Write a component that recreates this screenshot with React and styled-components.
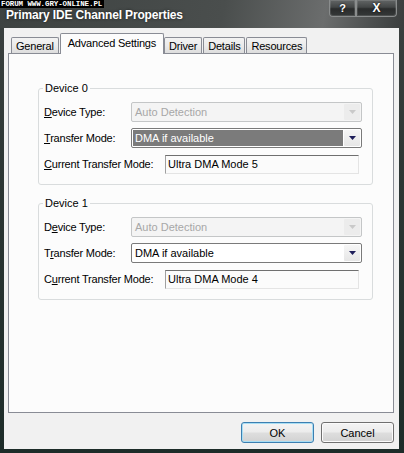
import React from "react";
import styled, { createGlobalStyle } from "styled-components";

const GlobalStyle = createGlobalStyle`
  html, body {
    margin: 0;
    padding: 0;
    background: #1b2624;
  }
  body {
    font-family: "Liberation Sans", Arial, sans-serif;
  }
`;

const Window = styled.div`
  position: relative;
  width: 404px;
  height: 453px;
  display: flex;
  flex-direction: column;
  overflow: hidden;
  background: linear-gradient(180deg, #3c4140 0%, #2c3634 40%, #1d2c29 100%);
`;

const Watermark = styled.div`
  position: absolute;
  top: 0;
  left: 0;
  padding: 0 2px 0 1px;
  background: #000;
  color: #fff;
  font-family: "Liberation Mono", monospace;
  font-weight: bold;
  font-size: 7.5px;
  line-height: 8px;
  letter-spacing: -0.1px;
`;

const TitleBar = styled.div`
  height: 28px;
  display: flex;
  align-items: flex-start;
  background: linear-gradient(100deg, #3d4241 0%, #4a4e4d 55%, #6b6d6d 80%, #4c4f4f 92%, #3a3d3d 100%);
`;

const Title = styled.div`
  flex: 1;
  padding: 8px 0 0 6px;
  color: #fff;
  font-weight: bold;
  font-size: 12px;
  line-height: 14px;
  letter-spacing: -0.15px;
  text-shadow: 0 0 3px rgba(0, 0, 0, 0.6);
`;

const CaptionButtons = styled.div`
  display: flex;
  margin-right: 7px;
`;

const CaptionButton = styled.div`
  width: ${(p) => p.$width}px;
  height: 17px;
  box-sizing: border-box;
  display: flex;
  align-items: center;
  justify-content: center;
  border: 1px solid #8a8d8d;
  border-top: none;
  border-radius: ${(p) => (p.$side === "left" ? "0 0 0 4px" : "0 0 4px 0")};
  background: linear-gradient(180deg, #626565 0%, #434646 45%, #2a2c2c 55%, #353838 100%);
  box-shadow: inset 0 0 0 1px rgba(255, 255, 255, 0.12);
  color: #fff;
  font-weight: bold;
  font-size: ${(p) => p.$size}px;
  line-height: 1;
  text-shadow: 0 0 2px #000;
`;

const Client = styled.div`
  flex: 1;
  display: flex;
  flex-direction: column;
  margin: 0 5px 4px 4px;
  background: #f1f1f1;
`;

const TabStrip = styled.div`
  display: flex;
  align-items: flex-end;
  height: 20px;
  padding: 5px 0 0 7px;
  position: relative;
  z-index: 1;
`;

const Tab = styled.div`
  height: ${(p) => (p.$active ? 21 : 16)}px;
  box-sizing: border-box;
  display: flex;
  align-items: center;
  padding: 0 ${(p) => (p.$active ? 7 : 4)}px ${(p) => (p.$active ? 3 : 0)}px;
  margin-right: ${(p) => (p.$active ? 0 : 1)}px;
  margin-bottom: ${(p) => (p.$active ? -1 : 0)}px;
  border: 1px solid #898c95;
  border-bottom: none;
  border-radius: 2px 2px 0 0;
  background: ${(p) =>
    p.$active ? "#fcfcfc" : "linear-gradient(180deg, #f3f3f3 0%, #ebebeb 50%, #dddddd 100%)"};
  font-size: 11px;
  letter-spacing: -0.2px;
  color: #000;
  white-space: nowrap;
`;

const Panel = styled.div`
  flex: 1;
  margin: 0 5px 0 4px;
  padding: 27px 20px 0 29px;
  border: 1px solid #898c95;
  background: #fcfcfc;
`;

const Group = styled.fieldset`
  margin: 0 0 11px;
  padding: 7px 10px 10px 5px;
  min-inline-size: 0;
  border: 1px solid #d9dcdd;
  border-radius: 3px;
`;

const Legend = styled.legend`
  margin-left: -1px;
  padding: 0 2px;
  font-size: 11px;
  line-height: 14px;
  color: #000;
`;

const Row = styled.div`
  display: flex;
  align-items: center;
  height: 20px;
  & + & {
    margin-top: 6px;
  }
`;

const Label = styled.div`
  width: ${(p) => p.$width}px;
  flex-shrink: 0;
  font-size: 11px;
  letter-spacing: -0.2px;
  color: #000;
`;

const Combo = styled.div`
  flex: 1;
  height: 20px;
  box-sizing: border-box;
  display: flex;
  padding: 1px;
  border: 1px solid ${(p) => (p.$disabled ? "#c4c6c7" : "#7a7a7a")};
  border-radius: 2px;
  background: ${(p) => (p.$disabled ? "#f4f4f4" : "#fff")};
`;

const ComboText = styled.div`
  flex: 1;
  display: flex;
  align-items: center;
  margin-right: 1px;
  padding-left: 2px;
  font-size: 11px;
  color: ${(p) => (p.$disabled ? "#a7a7a7" : p.$selected ? "#fff" : "#000")};
  background: ${(p) => (p.$selected ? "#7b7b7b" : "transparent")};
`;

const ArrowBox = styled.div`
  width: 16px;
  display: flex;
  align-items: center;
  justify-content: center;
  background: ${(p) => (p.$disabled ? "#ececec" : "linear-gradient(180deg, #f6f6f6, #e6e6e6)")};
  border-radius: 1px;
`;

const TextBox = styled.div`
  flex: 1;
  height: 19px;
  box-sizing: border-box;
  display: flex;
  align-items: center;
  margin-right: 3px;
  padding-left: 2px;
  border-top: 1px solid #6f6f6f;
  border-left: 1px solid #a0a0a0;
  border-right: 1px solid #e4e4e4;
  border-bottom: 1px solid #e4e4e4;
  background: #fbfbfb;
  font-size: 11px;
  color: #000;
`;

const Footer = styled.div`
  height: 36px;
  box-sizing: border-box;
  display: flex;
  justify-content: flex-end;
  gap: 7px;
  padding: 9px 5px 0 0;
`;

const Button = styled.div`
  width: 73px;
  height: 21px;
  box-sizing: border-box;
  display: flex;
  align-items: center;
  justify-content: center;
  border: 1px solid ${(p) => (p.$default ? "#3c7fb1" : "#707070")};
  border-radius: 3px;
  background: linear-gradient(180deg, #f4f4f4 0%, #ececec 48%, #dedede 52%, #d2d2d2 100%);
  box-shadow: ${(p) => (p.$default ? "inset 0 0 0 1px #a8def4" : "inset 0 0 0 1px #fbfbfb")};
  font-size: 11px;
  color: #000;
`;

const DropArrow = ({ disabled }) => (
  <svg width="7" height="4" viewBox="0 0 7 4">
    <path d="M0 0 H7 L3.5 4 Z" fill={disabled ? "#c9c9c9" : "#1e1e5a"} />
  </svg>
);

const Accel = ({ text, at }) => (
  <>
    {text.slice(0, at)}
    <u>{text[at]}</u>
    {text.slice(at + 1)}
  </>
);

const tabs = ["General", "Advanced Settings", "Driver", "Details", "Resources"];

const devices = [
  { name: "Device 0", accel: 0, focused: true, current: "Ultra DMA Mode 5" },
  { name: "Device 1", accel: 1, focused: false, current: "Ultra DMA Mode 4" }
];

const DeviceGroup = ({ device }) => (
  <Group>
    <Legend>{device.name}</Legend>
    <Row>
      <Label $width={87}>
        <Accel text="Device Type:" at={device.accel} />
      </Label>
      <Combo $disabled>
        <ComboText $disabled>Auto Detection</ComboText>
        <ArrowBox $disabled>
          <DropArrow disabled />
        </ArrowBox>
      </Combo>
    </Row>
    <Row>
      <Label $width={87}>
        <Accel text="Transfer Mode:" at={device.accel} />
      </Label>
      <Combo>
        <ComboText $selected={device.focused}>DMA if available</ComboText>
        <ArrowBox>
          <DropArrow />
        </ArrowBox>
      </Combo>
    </Row>
    <Row>
      <Label $width={121}>
        <Accel text="Current Transfer Mode:" at={device.accel} />
      </Label>
      <TextBox>{device.current}</TextBox>
    </Row>
  </Group>
);

const App = () => (
  <>
    <GlobalStyle />
    <Window>
      <TitleBar>
        <Title>Primary IDE Channel Properties</Title>
        <CaptionButtons>
          <CaptionButton $width={27} $side="left" $size={11}>
            ?
          </CaptionButton>
          <CaptionButton $width={41} $side="right" $size={12}>
            X
          </CaptionButton>
        </CaptionButtons>
      </TitleBar>
      <Watermark>FORUM WWW.GRY-ONLINE.PL</Watermark>
      <Client>
        <TabStrip>
          {tabs.map((t) => (
            <Tab key={t} $active={t === "Advanced Settings"}>
              {t}
            </Tab>
          ))}
        </TabStrip>
        <Panel>
          {devices.map((d) => (
            <DeviceGroup key={d.name} device={d} />
          ))}
        </Panel>
        <Footer>
          <Button $default>OK</Button>
          <Button>Cancel</Button>
        </Footer>
      </Client>
    </Window>
  </>
);

export default App;
